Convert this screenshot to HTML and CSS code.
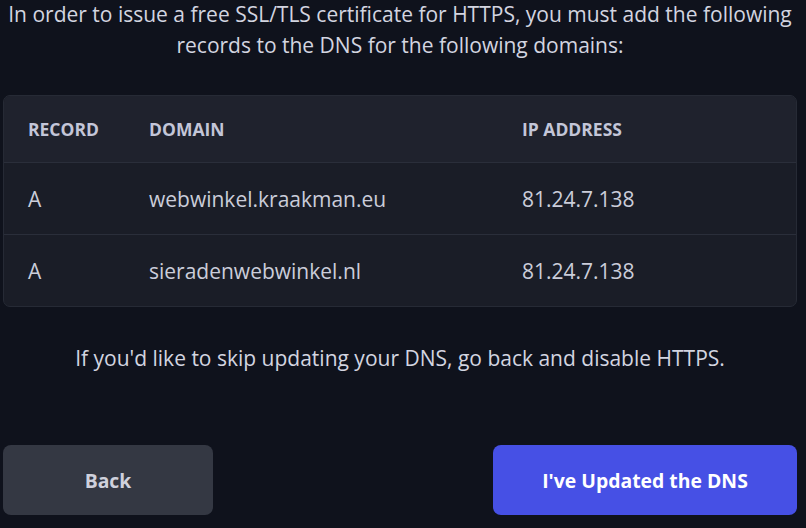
FILE: index.html
```html
<!DOCTYPE html>
<html>
<head>
<meta charset="utf-8">
<link rel="stylesheet" href="styles.css">
</head>
<body>
<div class="page">
  <p class="intro">In order to issue a free SSL/TLS certificate for HTTPS, you must add the following records to the DNS for the following domains:</p>
  <div class="card">
    <div class="row head">
      <div class="c1">RECORD</div>
      <div class="c2">DOMAIN</div>
      <div class="c3">IP ADDRESS</div>
    </div>
    <div class="row">
      <div class="c1">A</div>
      <div class="c2">webwinkel.kraakman.eu</div>
      <div class="c3">81.24.7.138</div>
    </div>
    <div class="row">
      <div class="c1">A</div>
      <div class="c2">sieradenwebwinkel.nl</div>
      <div class="c3">81.24.7.138</div>
    </div>
  </div>
  <p class="note">If you'd like to skip updating your DNS, go back and disable HTTPS.</p>
  <div class="actions">
    <button class="btn back">Back</button>
    <button class="btn primary">I've Updated the DNS</button>
  </div>
</div>
</body>
</html>
```
FILE: styles.css
```css
html, body {
  margin: 0;
  padding: 0;
  background: #0f121c;
}
body {
  font-family: "Open Sans", "Noto Sans", sans-serif;
  color: #cfd1de;
}
.page {
  padding: 0 9px 0 3px;
  width: 794px;
  box-sizing: content-box;
}
.intro {
  margin: -1px 0 0;
  text-align: center;
  font-size: 21px;
  line-height: 31px;
  color: #d3d5e0;
  padding: 0;
}
.card {
  margin-top: 34px;
  background: #1a1d27;
  border: 1px solid #262a35;
  border-radius: 7px;
  overflow: hidden;
}
.row {
  display: grid;
  grid-template-columns: 145px 373px 1fr;
  align-items: center;
  height: 71px;
  border-top: 1px solid #2a2e3a;
  font-size: 21px;
  color: #cbcdda;
}
.row.head {
  border-top: none;
  height: 66px;
  background: #1f222d;
  font-size: 17.5px;
  font-weight: 700;
  color: #c3c6d8;
}
.c1 { padding-left: 24px; }
.note {
  margin: 37px 0 0;
  text-align: center;
  font-size: 21px;
  line-height: 28px;
  color: #d3d5e0;
}
.actions {
  margin-top: 73px;
  display: flex;
  justify-content: space-between;
}
.btn {
  height: 70px;
  border: none;
  border-radius: 8px;
  font-family: "Open Sans", "Noto Sans", sans-serif;
  font-weight: 700;
  font-size: 19.4px;
}
.back {
  width: 210px;
  background: #343843;
  color: #cfd1dc;
}
.primary {
  width: 304px;
  background: #4650e5;
  color: #ffffff;
}
```
